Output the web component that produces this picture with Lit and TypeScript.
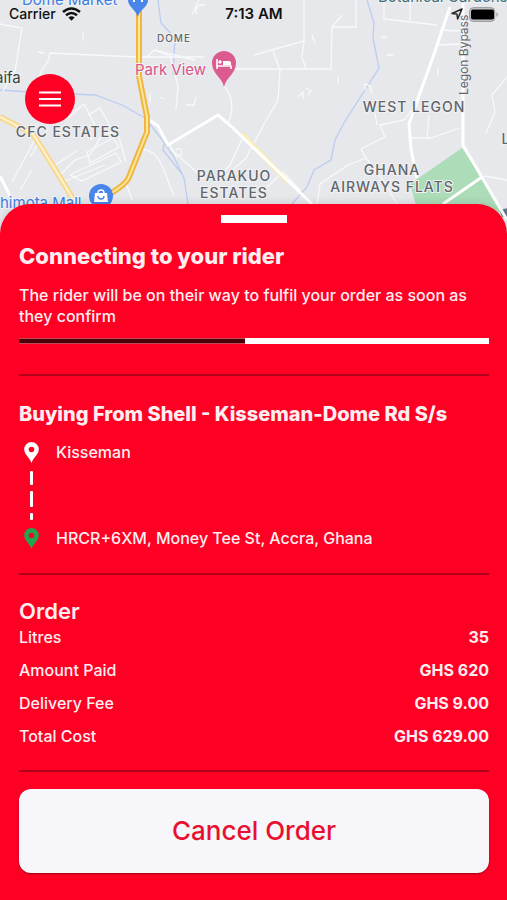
import { LitElement, html, css, svg } from "lit";
import { customElement, property } from "lit/decorators.js";

@customElement("city-map")
class CityMap extends LitElement {
  static styles = css`
    :host {
      display: block;
      height: 234px;
      overflow: hidden;
      background: #e6e8ec;
    }
    .map {
      display: block;
      width: 100%;
      height: 100%;
      font-family: Inter, "Liberation Sans", sans-serif;
    }
    .road {
      fill: none;
      stroke: #f8f9fb;
      stroke-width: 1.3;
    }
    .main {
      fill: none;
      stroke: #ffffff;
      stroke-width: 3;
    }
    .river {
      fill: none;
      stroke: #bccdf0;
      stroke-width: 1.3;
    }
    .label {
      font-size: 14px;
      font-weight: 500;
      letter-spacing: 1px;
      fill: #62666b;
      text-anchor: middle;
      stroke: #f1f2f4;
      stroke-width: 2px;
      paint-order: stroke;
    }
    .small {
      font-size: 10px;
    }
    .place {
      font-size: 15px;
      stroke: #f1f2f4;
      stroke-width: 2px;
      paint-order: stroke;
    }
    .blue {
      fill: #3f7ddf;
    }
    .pink {
      fill: #d9538a;
    }
    .teal {
      fill: #3f6f74;
    }
    .dark {
      fill: #3c4043;
    }
    .street {
      font-size: 12px;
      fill: #62666b;
    }
  `;

  render() {
    return html`
      <svg class="map" viewBox="0 0 507 234" preserveAspectRatio="xMidYMin slice" role="img" aria-label="Map">
        ${svg`
        <path d="M462 148 L410 184 L418 212 L502 212 L482 178 Z" fill="#acdcb8"/>
        <path d="M500 212 q3 -5 10 -3 v8 h-8 z" fill="#60798a"/>

        <path class="river" d="M158 0 L161 23 L175 38 L173 75"/>
        <path class="river" d="M0 90 L45 93 L95 95 L122 105 L145 118 L160 137 L174 157 L184 178 L189 210"/>
        <path class="river" d="M164 144 L163 150 L182 174"/>
        <path class="river" d="M367 0 L374 23 L373 38 L379 68 L363 93 L344 123 L335 140 L331 160 L314 170 L307 187 L292 204"/>

        <path class="road" d="M0 24 L22 28 L15 71 L3 91"/>
        <path class="road" d="M33 97 L41 72 L48 61 L50 53 L136 57 L147 57 L154 50 L170 56 L178 86 L176 110"/>
        <path class="road" d="M144 57 L204 57 M154 50 L195 60"/>
        <path class="road" d="M224 86 C234 98 233 112 228 124 M232 69 L331 69 L332 27 L356 27 L356 0"/>
        <path class="road" d="M192 15 L199 0 M197 14 q-3 -6 3 -9 l5 0"/>
        <path class="road" d="M254 55 L304 41 L304 0 M273 51 L280 70 L278 100 L264 124 L246 158 L226 176"/>
        <path class="road" d="M304 41 L302 57 L306 69 M332 27 L342 15"/>
        <path class="road" d="M384 0 L384 19 L437 25 M410 20 L410 0"/>
        <path class="road" d="M440 30 L462 31 M437 45 L460 44"/>
        <path class="road" d="M60 175 L75 160 L90 155 L100 138 L117 130 L126 162"/>
        <path class="road" d="M87 152 L113 138 L119 147 L90 163 Z M70 175 L116 153 L121 162 L82 181 Z"/>
        <path class="road" d="M60 183 L105 165 M52 167 L78 150 M30 157 L38 144"/>
        <path class="road" d="M68 118 L84 104 L95 125 M88 115 L100 108 L110 126"/>
        <path class="road" d="M140 150 q15 -2 23 18 L174 196 M125 180 L132 200"/>
        <path class="road" d="M170 145 L177 158 M176 150 q6 -4 6 4 q-3 4 -6 -1"/>
        <path class="road" d="M170 148 L204 179 M215 182 L230 165 L243 137 M264 190 L283 172 L300 190"/>
        <path class="road" d="M317 204 L320 184 L348 165 L366 158 L361 149 L385 137 L380 125 L404 120 L413 109"/>
        <path class="road" d="M366 158 L383 180 L397 204 M410 138 L431 138 L460 128 M429 115 L427 138"/>
        <path class="road" d="M507 77 L492 95 L495 112 L486 133 M484 176 L507 180"/>
        <path class="road" d="M298 97 l5 -5 v7 M306 88 l5 3 l-3 4 M338 83 v-6 M381 37 h6 M387 55 h6 M438 75 v-7"/>
        <path class="road" d="M365 90 v-6 l5 2 l2 7 M377 125 l-2 -12 M312 35 l3 8 M91 140 v-7 M83 41 v-8 M38 52 l6 1"/>
        <path class="road" d="M12 182 L40 130 M20 190 L32 170 M150 103 v-10 M160 97 l4 2 M186 105 h8 l2 -8"/>

        <path d="M242 134 L288 182" stroke="#f8edb4" stroke-width="5" fill="none"/>
        <path class="main" d="M146 118 L158 126 L168 145 L218 115 L232 127 L312 204"/>
        <path class="main" d="M450 7 L432 60 L420 93 L409 124 L411 149 L417 178"/>
        <path class="main" d="M463 0 L463 94 L463 145 L507 220"/>
        <path class="main" d="M443 204 L482 177 M0 176 L14 204"/>

        <path d="M0 117 L33 134 L53 166 L75 202" fill="none" stroke="#f8d890" stroke-width="6"/>
        <path d="M0 117 L33 134 L53 166 L75 202" fill="none" stroke="#fff2cc" stroke-width="2"/>
        <path d="M139 0 L139 76 L147 117 L147 132 L129 177 Q127 184 105 197" fill="none" stroke="#f0b73f" stroke-width="6"/>
        <path d="M139 0 L139 76 L147 117 L147 132 L129 177 Q127 184 105 197" fill="none" stroke="#fde59b" stroke-width="2"/>

        <text class="place blue" x="22" y="5">Dome Market</text>
        <path d="M128 0 h20 q0 4 -4 8 q-5 4 -6 9 q-2 -5 -6 -9 q-4 -4 -4 -8z" fill="#4a86ea"/>
        <path d="M134 2 v-2 M142 2 v-2" stroke="#ffffff" stroke-width="2"/>
        <text class="label small" x="174" y="42">DOME</text>
        <text class="place pink" x="135" y="75">Park View</text>
        <path d="M224 87 C222 77 212 74 212 63 A12 12 0 0 1 236 63 C236 74 226 77 224 87 Z" fill="#db5b90"/>
        <path d="M217 59 v10 M217 66 h14 v3" fill="none" stroke="#ffffff" stroke-width="1.6"/>
        <circle cx="220" cy="62" r="1.7" fill="#ffffff"/>
        <path d="M223 61 h6 q2 0 2 2 v2 h-8z" fill="#ffffff"/>
        <text class="place dark" x="-5" y="83">aifa</text>
        <text class="label" x="68" y="137">CFC ESTATES</text>
        <text class="label" x="414" y="112">WEST LEGON</text>
        <text class="label" x="234" y="181">PARAKUO</text>
        <text class="label" x="234" y="198">ESTATES</text>
        <text class="label" x="392" y="175">GHANA</text>
        <text class="label" x="392" y="192">AIRWAYS FLATS</text>
        <text class="label" x="506" y="144">L</text>
        <text class="place blue" x="0" y="208">himota Mall</text>
        <circle cx="101" cy="196" r="12" fill="#4a86ea"/>
        <path d="M95 193 h12 l1 9 h-14z" fill="#ffffff"/>
        <path d="M98 194 v-1 a3 3 0 0 1 6 0 v1" fill="none" stroke="#ffffff" stroke-width="1.4"/>
        <path d="M98 196 a3 3 0 0 0 6 0" fill="none" stroke="#4a86ea" stroke-width="1.3"/>
        <text class="place teal" x="378" y="2">Botanical Gardens</text>
        <text class="street" transform="translate(468 95) rotate(-90)">Legon Bypass</text>
        `}
      </svg>
    `;
  }
}

@customElement("status-bar")
class StatusBar extends LitElement {
  static styles = css`
    :host {
      display: grid;
      grid-template-columns: 1fr auto 1fr;
      align-items: center;
      padding: 4px 8px 0 9px;
      font: 500 14px/20px Inter, "Liberation Sans", sans-serif;
      color: #111111;
    }
    .side {
      display: flex;
      align-items: center;
      gap: 6px;
    }
    .end {
      justify-content: flex-end;
    }
    .time {
      font-size: 15px;
      font-weight: 600;
    }
  `;

  render() {
    return html`
      <div class="side">
        <span>Carrier</span>
        <svg width="19" height="14" viewBox="0 0 19 14" fill="none" stroke="#111111" stroke-width="2.6">
          <path d="M1 5 Q9.500 -2 18 5" />
          <path d="M4 8.300 Q9.500 3.700 15 8.300" />
          <path d="M6.400 10.600 Q9.500 8 12.600 10.600 L9.500 13.800Z" fill="#111111" stroke="none" />
        </svg>
      </div>
      <span class="time">7:13 AM</span>
      <div class="side end">
        <svg width="12" height="12" viewBox="0 0 12 12" fill="none" stroke="#222222" stroke-width="1.500" stroke-linejoin="round">
          <path d="M11 1 L1 5.500 L6 6 L6.600 11Z" />
        </svg>
        <svg width="30" height="15" viewBox="0 0 30 15">
          <rect x="0.700" y="0.700" width="25" height="13.600" rx="3.600" fill="#c9cacc" stroke="#8f9092" />
          <rect x="2" y="2.500" width="23" height="10" rx="2" fill="#000000" />
          <path d="M27.500 5 q2.500 2.500 0 5z" fill="#8f9092" />
        </svg>
      </div>
    `;
  }
}

@customElement("map-pin")
class MapPin extends LitElement {
  static styles = css`
    :host {
      display: block;
      height: 21px;
      color: #ffffff;
    }
    .pin {
      display: block;
    }
  `;

  render() {
    return html`
      <svg class="pin" width="15" height="21" viewBox="0 0 15 21">
        <path
          fill="currentColor"
          fill-rule="evenodd"
          d="M7.500 0 A7.300 7.300 0 0 1 14.800 7.300 C14.800 12.500 9.800 15 7.500 21 C5.200 15 0.200 12.500 0.200 7.300 A7.300 7.300 0 0 1 7.500 0Z M7.500 4.700 a2.800 2.800 0 1 0 0 5.600 a2.800 2.800 0 1 0 0 -5.600Z"
        />
      </svg>
    `;
  }
}

@customElement("order-summary")
class OrderSummary extends LitElement {
  @property({ attribute: false }) rows: [string, string][] = [];

  static styles = css`
    .table {
      width: 100%;
      border-collapse: collapse;
      font-size: 16px;
      line-height: 21px;
    }
    .name,
    .value {
      height: 33px;
      padding: 0;
    }
    .name {
      font-weight: 500;
      text-align: left;
    }
    .value {
      font-weight: 700;
      text-align: right;
    }
  `;

  render() {
    return html`
      <table class="table" aria-label="Order">
        <tbody>
          ${this.rows.map(
            ([name, value]) => html`<tr>
              <th class="name" scope="row">${name}</th>
              <td class="value">${value}</td>
            </tr>`
          )}
        </tbody>
      </table>
    `;
  }
}

@customElement("app-root")
class AppRoot extends LitElement {
  static styles = css`
    :host {
      display: flex;
      flex-direction: column;
      position: relative;
      min-height: 100vh;
      font-family: Inter, "Liberation Sans", sans-serif;
      background: #e6e8ec;
    }
    .status {
      position: absolute;
      top: 0;
      left: 0;
      right: 0;
    }
    .menu {
      position: absolute;
      top: 74px;
      left: 25px;
      display: grid;
      place-items: center;
      width: 50px;
      height: 50px;
      padding: 0;
      border: 0;
      border-radius: 50%;
      background: #ff0025;
      cursor: pointer;
    }
    .sheet {
      position: relative;
      flex: 1;
      display: flex;
      flex-direction: column;
      box-sizing: border-box;
      margin-top: -30px;
      padding: 11px 18px 27px 19px;
      border-radius: 30px 30px 0 0;
      background: #ff0025;
      box-shadow: 0 0 10px rgba(0, 0, 0, 0.15);
      color: #ffeef0;
    }
    .handle {
      align-self: center;
      width: 66px;
      height: 8px;
      background: #ffffff;
    }
    .title,
    .order {
      margin: 0;
      line-height: 20px;
    }
    .title {
      font-size: 20px;
      font-weight: 800;
    }
    .connecting {
      margin-top: 23px;
      font-size: 22px;
    }
    .note {
      margin: 19px 0 11px;
      font-size: 16px;
      font-weight: 500;
      line-height: 21px;
    }
    .progress {
      appearance: none;
      display: block;
      width: 100%;
      height: 6px;
      border: 0;
      background: #ffffff;
    }
    .progress::-webkit-progress-bar {
      background: #ffffff;
    }
    .progress::-webkit-progress-value {
      box-sizing: border-box;
      border: solid #c04a55;
      border-width: 1px 0;
      background: #4a0008;
    }
    .rule {
      width: 100%;
      height: 2px;
      margin: 0;
      border: 0;
      background: #b0001a;
    }
    .first {
      margin: 30px 0 28px;
    }
    .route {
      display: grid;
      grid-template-columns: 25px 1fr;
      column-gap: 12px;
      justify-items: center;
      align-items: center;
      margin: 18px 0 24px;
      font-size: 16px;
      font-weight: 500;
      line-height: 21px;
    }
    .place {
      justify-self: start;
    }
    .dashes {
      display: block;
      margin: 8px 0;
    }
    .drop {
      color: #1fa651;
    }
    .order {
      margin-top: 26px;
      font-size: 22px;
      font-weight: 600;
    }
    .last {
      margin: 17px 0;
    }
    .cancel {
      min-height: 84px;
      border: 0;
      border-radius: 12px;
      background: #f7f6fb;
      box-shadow: 0 1px 2px rgba(0, 0, 0, 0.4);
      color: #e8102f;
      font: 500 26px/30px Inter, "Liberation Sans", sans-serif;
      cursor: pointer;
    }
  `;

  private rows: [string, string][] = [
    ["Litres", "35"],
    ["Amount Paid", "GHS 620"],
    ["Delivery Fee", "GHS 9.00"],
    ["Total Cost", "GHS 629.00"],
  ];

  render() {
    return html`
      <city-map></city-map>
      <status-bar class="status"></status-bar>
      <button class="menu" aria-label="Menu">
        <svg width="22" height="16" viewBox="0 0 22 16" stroke="#ffffff" stroke-width="2">
          <path d="M0 1.500H22M0 8H22M0 14.500H22" />
        </svg>
      </button>
      <main class="sheet">
        <div class="handle"></div>
        <h1 class="title connecting">Connecting to your rider</h1>
        <p class="note">The rider will be on their way to fulfil your order as soon as they confirm</p>
        <progress class="progress" max="100" value="48" aria-label="Connecting"></progress>
        <hr class="rule first" />
        <h2 class="title">Buying From Shell - Kisseman-Dome Rd S/s</h2>
        <div class="route">
          <map-pin></map-pin>
          <span class="place">Kisseman</span>
          <svg class="dashes" width="3" height="49" viewBox="0 0 3 49" fill="#ffffff">
            <rect width="3" height="14" rx="1" />
            <rect y="20" width="3" height="16" rx="1" />
            <rect y="42" width="3" height="7" rx="1" />
          </svg>
          <span></span>
          <map-pin class="drop"></map-pin>
          <span class="place">HRCR+6XM, Money Tee St, Accra, Ghana</span>
        </div>
        <hr class="rule" />
        <h2 class="order">Order</h2>
        <order-summary .rows=${this.rows}></order-summary>
        <hr class="rule last" />
        <button class="cancel">Cancel Order</button>
      </main>
    `;
  }
}
